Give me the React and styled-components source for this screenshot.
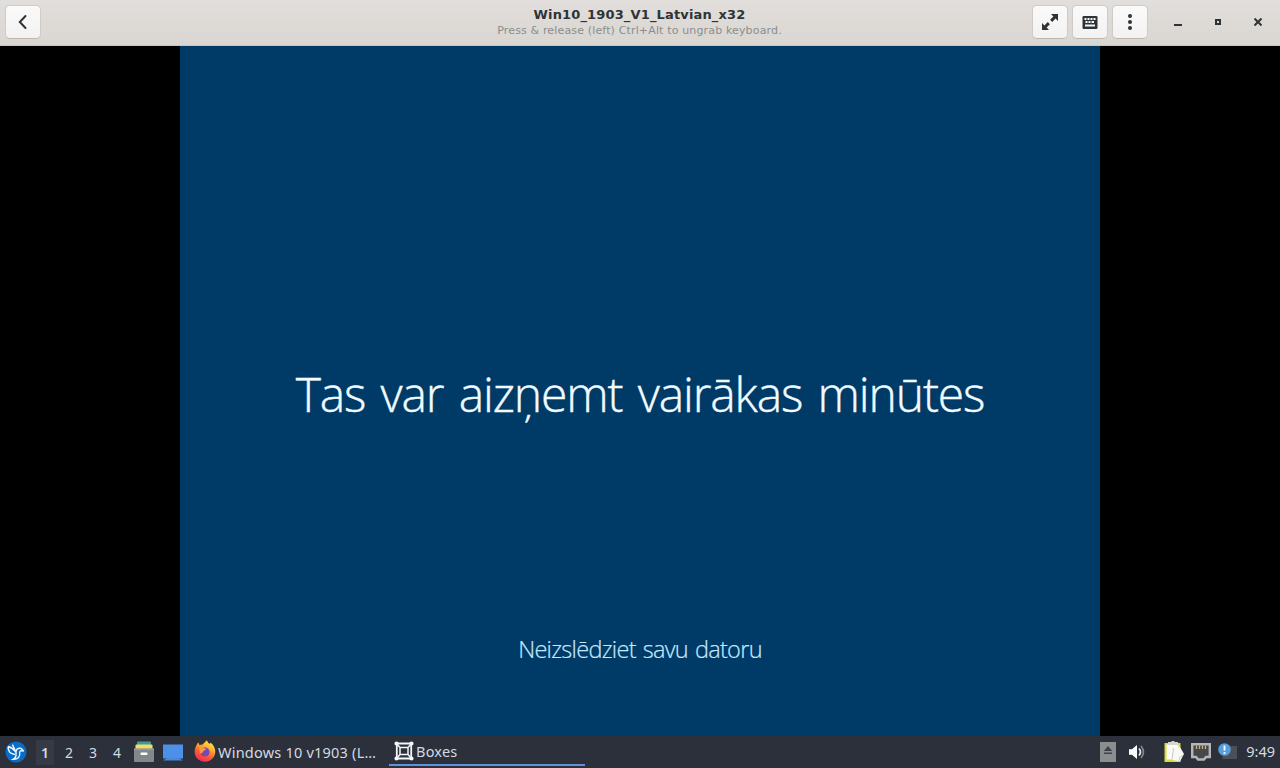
import React from 'react';
import styled, { createGlobalStyle } from 'styled-components';

const GlobalStyle = createGlobalStyle`
  * {
    box-sizing: border-box;
  }

  body {
    margin: 0;
    background: #000;
    overflow: hidden;
  }
`;

const Desktop = styled.div`
  width: 1280px;
  height: 768px;
  display: flex;
  flex-direction: column;
`;

const HeaderBar = styled.header`
  height: 46px;
  flex: none;
  display: grid;
  grid-template-columns: 248px 1fr 253px;
  padding: 5px 0 0 5px;
  background: linear-gradient(#e1dedb, #dad6d2);
  border-bottom: 1px solid #cbc7bd;
`;

const HeaderButton = styled.button`
  width: 36px;
  height: 34px;
  flex: none;
  padding: 0;
  display: flex;
  align-items: center;
  justify-content: center;
  background: linear-gradient(#fbfafa, #f3f2f1);
  border: 1px solid #d0cbc6;
  border-bottom-color: #bfb8b1;
  border-radius: 5px;
`;

const TitleBox = styled.div`
  display: flex;
  flex-direction: column;
  align-items: center;
  padding-top: 2px;
  margin: 0 1px 0 0;
  font-family: 'DejaVu Sans', sans-serif;
  white-space: nowrap;
`;

const Title = styled.div`
  font-size: 13px;
  line-height: 16px;
  font-weight: bold;
  color: #2e3436;
  letter-spacing: 0.15px;
`;

const Subtitle = styled.div`
  font-size: 11px;
  line-height: 16px;
  color: #8b8e8b;
  letter-spacing: 0.15px;
`;

const HeaderActions = styled.div`
  display: flex;
  gap: 4px;
  padding-left: 5px;
`;

const WindowControls = styled.div`
  display: flex;
  margin-left: 6px;
`;

const WindowControl = styled.div`
  width: 40px;
  height: 34px;
  flex: none;
  display: flex;
  align-items: center;
  justify-content: center;
`;

const Viewer = styled.main`
  height: 690px;
  flex: none;
  display: flex;
  justify-content: center;
  background: #000;
`;

const GuestScreen = styled.section`
  width: 920px;
  display: flex;
  flex-direction: column;
  align-items: center;
  background: #003b67;
  font-family: 'Open Sans', sans-serif;
  font-weight: 300;
  white-space: nowrap;
`;

const Message = styled.div`
  margin-top: 313px;
  font-size: 48px;
  line-height: 70px;
  letter-spacing: -1.13px;
  word-spacing: 4px;
  -webkit-text-stroke: 0.4px #f2fbff;
  color: #f2fbff;
`;

const Notice = styled.div`
  margin-top: 203px;
  font-size: 23.5px;
  line-height: 34px;
  letter-spacing: -0.7px;
  word-spacing: 1.5px;
  -webkit-text-stroke: 0.2px #c5e8ff;
  color: #c5e8ff;
`;

const Panel = styled.footer`
  height: 32px;
  flex: none;
  display: flex;
  align-items: center;
  background: #2b303b;
  color: #d3dae3;
  font-family: 'Noto Sans', sans-serif;
  font-size: 14.5px;
  white-space: nowrap;
`;

const Launcher = styled.div`
  width: ${(props) => props.$width}px;
  height: 32px;
  display: flex;
  align-items: center;
  justify-content: center;
`;

const Workspace = styled.div`
  width: ${(props) => (props.$active ? 18 : 24)}px;
  margin: ${(props) => (props.$active ? '0 3px' : '0')};
  height: 25px;
  line-height: 25px;
  text-align: center;
  font-size: 14px;
  font-weight: ${(props) => (props.$active ? 600 : 400)};
  background: ${(props) => (props.$active ? '#353a46' : 'transparent')};
`;

const Task = styled.div`
  width: 196px;
  height: 30px;
  align-self: flex-start;
  margin-left: ${(props) => props.$offset}px;
  padding-top: 2px;
  padding-left: ${(props) => props.$indent}px;
  display: flex;
  align-items: center;
  gap: 2px;
  border-bottom: 2px solid ${(props) => (props.$active ? '#5f94dd' : 'transparent')};
  letter-spacing: 0.22px;
`;

const TaskLabel = styled.span`
  line-height: 20px;
  padding-top: ${(props) => props.$drop}px;
`;

const Tray = styled.div`
  margin-left: auto;
  height: 32px;
  display: flex;
  align-items: center;
  padding-right: 5px;
`;

const TrayItem = styled.div`
  width: ${(props) => props.$width}px;
  display: flex;
  justify-content: flex-start;
`;

const Clock = styled.div`
  line-height: 20px;
  margin-top: -2px;
`;

const BackIcon = () => (
  <svg width="16" height="16" viewBox="0 0 16 16" fill="none" stroke="#2e3436" strokeWidth="2" strokeLinecap="round">
    <path d="M10.5 2 4.8 8l5.7 6" />
  </svg>
);

const FullscreenIcon = () => (
  <svg width="16" height="16" viewBox="0 0 16 16" fill="#2e3436">
    <path d="M9 0h7v7l-2.4-2.4-3.4 3.3-2.1-2.1 3.3-3.4zM7 16H0V9l2.4 2.4 3.4-3.3 2.1 2.1-3.3 3.4z" />
  </svg>
);

const KeyboardIcon = () => (
  <svg width="16" height="16" viewBox="0 0 16 16">
    <rect x="0.5" y="2" width="15" height="13" rx="1.2" fill="#2e3436" />
    <path d="M2.5 5h2M5.5 5h2M8.5 5h2M11.5 5h2M3.5 8h2M6.5 8h2M9.5 8h2.5" stroke="#f7f6f5" strokeWidth="1.8" />
    <path d="M3 11.5h10" stroke="#f7f6f5" strokeWidth="2" />
  </svg>
);

const MenuIcon = () => (
  <svg width="16" height="16" viewBox="0 0 16 16" fill="#2e3436">
    <circle cx="8" cy="2" r="2" />
    <circle cx="8" cy="8" r="2" />
    <circle cx="8" cy="14" r="2" />
  </svg>
);

const LubuntuIcon = () => (
  <svg width="22" height="22" viewBox="0 0 22 22">
    <circle cx="11" cy="11" r="10.5" fill="#0a6cc6" />
    <path d="M3 5.5c3 .8 5.7 2.6 8 5.6M3 5.5c0 4.6 2.2 7.5 7 8M7.4 3.6l3.2 6.6" fill="none" stroke="#edf7ff" strokeWidth="1.4" />
    <path d="M11 12.5c-.6-4 1.8-5.6 4.2-5.2 2 .3 2 1.7 3.6 2.7-2-.4-3.8-.6-4.2 1.4 1 4-1.6 7.3-6.6 7 2.6-1.4 3.4-3 3-5.9z" fill="none" stroke="#edf7ff" strokeWidth="1.4" />
  </svg>
);

const FilesIcon = () => (
  <svg width="22" height="22" viewBox="0 0 22 22">
    <rect x="4" y="0.5" width="14" height="5" rx="1" fill="#409b95" />
    <rect x="2.5" y="3.5" width="17" height="6" rx="1" fill="#f4dc6d" />
    <rect x="1" y="7.5" width="20" height="13.5" rx="1" fill="#84888b" />
    <path d="M1 7.5h20v1.2H1z" fill="#a7a49a" />
    <rect x="7.5" y="11.5" width="7" height="2.5" rx="1" fill="#fff" />
  </svg>
);

const ShowDesktopIcon = () => (
  <svg width="20" height="18" viewBox="0 0 20 18">
    <path d="M0 1.5h20v14H0z" fill="#4c90e8" />
    <path d="m0 17.5 4-2.5h12l4 2.5z" fill="#4788dc" />
  </svg>
);

const FirefoxIcon = () => (
  <svg width="22" height="22" viewBox="0 0 22 22">
    <defs>
      <linearGradient id="fox" x1="0.8" y1="0" x2="0.3" y2="1">
        <stop offset="0" stopColor="#fff044" />
        <stop offset="0.35" stopColor="#ffb02e" />
        <stop offset="0.65" stopColor="#ff5d32" />
        <stop offset="1" stopColor="#f12562" />
      </linearGradient>
    </defs>
    <path d="M4.2 2.2 5.5 5l3-.5C10.2 3 11.5 1.4 13 .2c.5 2 1.2 2.7 3 3.8l.4-1.6c3 2.2 4.9 5.4 4.9 9.2 0 5.8-4.6 10.2-10.3 10.2S.6 17.5.6 11.8C.6 8 2.3 5.4 4.2 2.2z" fill="url(#fox)" />
    <circle cx="11" cy="12" r="4.6" fill="#7548b4" />
    <path d="M4.6 7.6c2-1 3.7-.6 4.7.5l2.8.7c-.4 1.5-2 1.7-2.8 2.4-.3 1.2-1.8 2.6-3.4 2-.5-1.8-.8-3.7-1.3-5.6z" fill="#ff9640" />
  </svg>
);

const BoxesIcon = () => (
  <svg width="20" height="20" viewBox="0 0 20 20" fill="none" stroke="#f4f6f8">
    <path d="M3 2.5h14M3 17.5h14M2.8 3v14M17.2 3v14" strokeWidth="1.8" />
    <path d="M6 6.5h8v7H6zM2.5 2.5 6 6.5M17.5 2.5 14 6.5M2.5 17.5 6 13.5M17.5 17.5 14 13.5" strokeWidth="1.5" />
    <path d="M2.5 2.5h.01M17.5 2.5h.01M2.5 17.5h.01M17.5 17.5h.01" strokeWidth="4.2" strokeLinecap="round" />
  </svg>
);

const EjectIcon = () => (
  <svg width="16" height="20" viewBox="0 0 16 20">
    <rect width="16" height="20" fill="#8b8d8f" />
    <path d="m8 4 4.2 5H3.8zM4 10.5h8v1.5H4z" fill="#3f4249" />
  </svg>
);

const VolumeIcon = () => (
  <svg width="16" height="16" viewBox="0 0 16 16" fill="none">
    <path d="M0 5.2h3L8 1v14l-5-4.2H0z" fill="#fff" />
    <path d="M10 4.5q3 3.5 0 7" stroke="#e2e5e8" strokeWidth="1.8" />
    <path d="M12 2q5 6 0 12" stroke="#858a92" strokeWidth="1.6" />
  </svg>
);

const ClipboardIcon = () => (
  <svg width="20" height="22" viewBox="0 0 20 22">
    <path d="M.5 2h16v19H.5z" fill="#d8de36" />
    <path d="M2.5 3.5h12v15h-12z" fill="#fbfbf8" />
    <path d="M4 1h3l1-1h2l1 1h3v3H4z" fill="#d5d5d3" />
    <path d="m9 7 7-1 4 7-4 7.5-8-1.5z" fill="#f8f8f6" />
    <path d="M9.5 7 8 18.5M15 20l1-4 3-1.5" fill="none" stroke="#bdbfbb" strokeWidth="0.8" />
  </svg>
);

const NetworkIcon = () => (
  <svg width="20" height="18" viewBox="0 0 20 18">
    <path d="M1.2 1.2h17.6V14H15l-2 2.5H7L5 14H1.2z" fill="#45474a" stroke="#b6b6b4" strokeWidth="2.4" />
    <path d="M5.5 2.5V6M8.5 2.5V6M11.5 2.5V6M14.5 2.5V6" stroke="#c5b47d" strokeWidth="1.3" />
  </svg>
);

const UpdateIcon = () => (
  <svg width="20" height="18" viewBox="0 0 20 18">
    <path d="M8 3h11v13H4z" fill="#4b4f57" />
    <circle cx="6.5" cy="6.5" r="6.3" fill="#559fdd" />
    <path d="M6.5 2.5v5M6.5 9v2" stroke="#fff" strokeWidth="1.8" />
  </svg>
);

const workspaces = [1, 2, 3, 4];

const App = () => (
  <>
    <GlobalStyle />
    <Desktop>
      <HeaderBar>
        <div>
          <HeaderButton aria-label="Back"><BackIcon /></HeaderButton>
        </div>
        <TitleBox>
          <Title>Win10_1903_V1_Latvian_x32</Title>
          <Subtitle>Press &amp; release (left) Ctrl+Alt to ungrab keyboard.</Subtitle>
        </TitleBox>
        <HeaderActions>
          <HeaderButton aria-label="Fullscreen"><FullscreenIcon /></HeaderButton>
          <HeaderButton aria-label="Keyboard"><KeyboardIcon /></HeaderButton>
          <HeaderButton aria-label="Menu"><MenuIcon /></HeaderButton>
          <WindowControls>
            <WindowControl>
              <svg width="8" height="8"><path d="M0 7h8" stroke="#2e3436" strokeWidth="2" /></svg>
            </WindowControl>
            <WindowControl>
              <svg width="8" height="8"><path d="M2 2h4v4H2z" fill="none" stroke="#2e3436" strokeWidth="2" /></svg>
            </WindowControl>
            <WindowControl>
              <svg width="8" height="8"><path d="m.5.5 7 7m0-7-7 7" stroke="#2e3436" strokeWidth="2" /></svg>
            </WindowControl>
          </WindowControls>
        </HeaderActions>
      </HeaderBar>

      <Viewer>
        <GuestScreen>
          <Message>Tas var aizņemt vairākas minūtes</Message>
          <Notice>Neizslēdziet savu datoru</Notice>
        </GuestScreen>
      </Viewer>

      <Panel>
        <Launcher $width={31}><LubuntuIcon /></Launcher>
        <Launcher $width={2} />
        {workspaces.map((n) => (
          <Workspace key={n} $active={n === 1}>{n}</Workspace>
        ))}
        <Launcher $width={30}><FilesIcon /></Launcher>
        <Launcher $width={27}><ShowDesktopIcon /></Launcher>
        <Task $indent={8} $offset={0}>
          <FirefoxIcon />
          <TaskLabel $drop={2}>Windows 10 v1903 (L…</TaskLabel>
        </Task>
        <Task $active $indent={5} $offset={7}>
          <BoxesIcon />
          <TaskLabel $drop={0}>Boxes</TaskLabel>
        </Task>
        <Tray>
          <TrayItem $width={29}><EjectIcon /></TrayItem>
          <TrayItem $width={35}><VolumeIcon /></TrayItem>
          <TrayItem $width={27}><ClipboardIcon /></TrayItem>
          <TrayItem $width={27}><NetworkIcon /></TrayItem>
          <TrayItem $width={28}><UpdateIcon /></TrayItem>
          <Clock>9:49</Clock>
        </Tray>
      </Panel>
    </Desktop>
  </>
);

export default App;
